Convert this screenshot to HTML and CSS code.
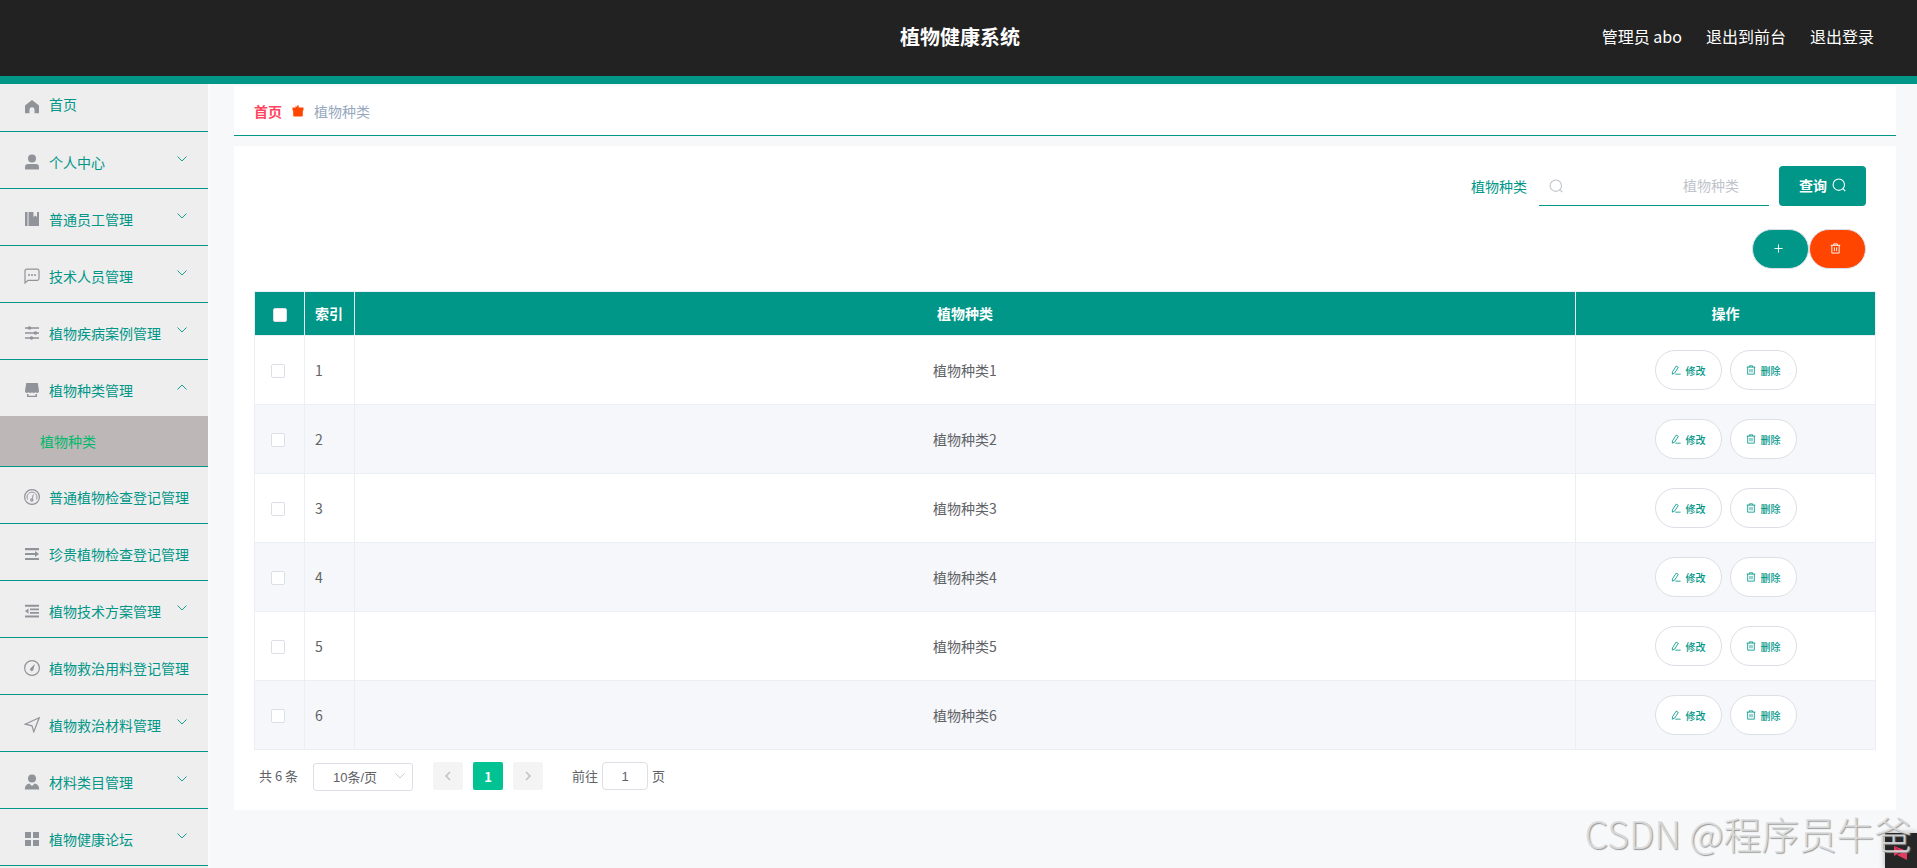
FILE: index.html
```
<!DOCTYPE html>
<html lang="zh-CN">
<head>
    <meta charset="UTF-8">
    <meta name="viewport" content="width=device-width, initial-scale=1.0">
    <title>植物健康系统</title>
    <link rel="stylesheet" href="styles.css">
</head>
<body>
    <!-- shared icons -->
    <svg class="sprite">
        <symbol id="arrow-down" viewBox="0 0 12 12"><path d="M1.5 3.500L6 8l4.500-4.500" fill="none" stroke="currentColor" stroke-width=".9"/></symbol>
        <symbol id="page-arrow" viewBox="0 0 12 12"><path d="M8 2L4 6l4 4" fill="none" stroke="currentColor" stroke-width="1.700"/></symbol>
        <symbol id="search" viewBox="0 0 14 14"><circle cx="6.800" cy="6.700" r="5.700" fill="none" stroke="currentColor" stroke-width="1.100"/><path d="M10.800 10.700l2.500 2.500" stroke="currentColor" stroke-width="1.200"/></symbol>
        <symbol id="trash" viewBox="0 0 12 12"><path d="M.800 2.500h10.400M4 2.500v-1.500h4v1.500M2 2.500v8.500h8V2.500M4.800 4.800v4M7.200 4.800v4" fill="none" stroke="currentColor"/></symbol>
        <symbol id="edit" viewBox="0 0 12 12"><path d="M1.800 8.200L6.200 1.300l2.600 1.600-4.400 6.800-2.900 1.300zM5.200 11h6.300" fill="none" stroke="currentColor"/></symbol>
    </svg>

    <header class="header">
        <h1 class="title">植物健康系统</h1>
        <div class="user-menu">
            <span>管理员 abo</span>
            <span>退出到前台</span>
            <span>退出登录</span>
        </div>
    </header>

    <div class="layout">
        <ul class="sidebar">
            <li class="item home">
                <svg class="icon" viewBox="0 0 16 16"><path d="M8 1L15 6.500v7.800h-4.500v-3.500a2.500 2.500 0 0 0-5 0v3.500H1V6.500z"/></svg>
                <span>首页</span>
            </li>
            <li class="item">
                <svg class="icon" viewBox="0 0 16 16"><circle cx="8" cy="4.500" r="4"/><path d="M1 15.500v-2.300q0-3.200 3.200-3.200h7.600q3.200 0 3.200 3.200v2.300z"/></svg>
                <span>个人中心</span>
                <svg class="arrow"><use href="#arrow-down"/></svg>
            </li>
            <li class="item">
                <svg class="icon" viewBox="0 0 16 16"><path d="M1 1h2.500v14H1zM4.500 1h5v5L11.500 4.500 13 6V1h2v14H4.500z"/></svg>
                <span>普通员工管理</span>
                <svg class="arrow"><use href="#arrow-down"/></svg>
            </li>
            <li class="item">
                <svg class="icon line" viewBox="0 0 16 16"><path d="M1 15V3q0-1.800 1.800-1.800h10.400q1.800 0 1.800 1.800v7.500q0 1.800-1.800 1.800H4z"/><path d="M4 7h2M7 7h2M10 7h2" stroke-width="1.500"/></svg>
                <span>技术人员管理</span>
                <svg class="arrow"><use href="#arrow-down"/></svg>
            </li>
            <li class="item">
                <svg class="icon" viewBox="0 0 16 16"><path d="M1 2.300h14v1.400H1zM1 7.300h14v1.400H1zM1 12.300h14v1.400H1z"/><circle cx="5.500" cy="3" r="1.800"/><circle cx="11.500" cy="8" r="1.800"/><circle cx="7.500" cy="13" r="1.800"/></svg>
                <span>植物疾病案例管理</span>
                <svg class="arrow"><use href="#arrow-down"/></svg>
            </li>
            <li class="item open">
                <svg class="icon" viewBox="0 0 16 16"><path d="M2.200 1h11.600L15 9q0 2-1.800 2-1 0-1.700-.8-.8.800-1.800.8t-1.700-.8q-.8.800-1.700.8t-1.800-.8q-.7.800-1.700.8Q1 11 1 9zM3 12h1.500v1.800h7V12H13v3H3z"/></svg>
                <span>植物种类管理</span>
                <svg class="arrow"><use href="#arrow-down"/></svg>
            </li>
            <li class="sub-item">植物种类</li>
            <li class="item">
                <svg class="icon line" viewBox="0 0 16 16"><circle cx="8" cy="8" r="7.400"/><path d="M3.600 10.500a5 5 0 1 1 8.800 0M8.300 9.800L9.300 5.500" stroke-width="1"/><circle cx="7.800" cy="11" r="1.100"/></svg>
                <span>普通植物检查登记管理</span>
            </li>
            <li class="item">
                <svg class="icon" viewBox="0 0 16 16"><path d="M1 2h14v2.200H1zM1 7h10V5l4 3-4 3V9H1zM1 11.900h14v2.200H1z"/></svg>
                <span>珍贵植物检查登记管理</span>
            </li>
            <li class="item">
                <svg class="icon" viewBox="0 0 16 16"><path d="M1 1.800h14v2H1zM6 5.500h9v1.800H6zM6 9h9v1.800H6zM1 12.400h14v2H1zM4.500 5.500v5.200L1 8.100z"/></svg>
                <span>植物技术方案管理</span>
                <svg class="arrow"><use href="#arrow-down"/></svg>
            </li>
            <li class="item">
                <svg class="icon line" viewBox="0 0 16 16"><circle cx="8" cy="8" r="7.400"/><path d="M10.800 4L9.300 10q-1 1.800-2.500.8T6.300 8.500z" fill="#909399" stroke="none"/></svg>
                <span>植物救治用料登记管理</span>
            </li>
            <li class="item">
                <svg class="icon line" viewBox="0 0 16 16"><path d="M1 7.200L15.200.8 9.800 14.800 8 8.800z"/></svg>
                <span>植物救治材料管理</span>
                <svg class="arrow"><use href="#arrow-down"/></svg>
            </li>
            <li class="item">
                <svg class="icon" viewBox="0 0 16 16"><circle cx="8" cy="4.500" r="4"/><path d="M.8 15.500q0-5.200 4.400-6L8 12l2.800-2.500q4.400.8 4.400 6z"/></svg>
                <span>材料类目管理</span>
                <svg class="arrow"><use href="#arrow-down"/></svg>
            </li>
            <li class="item">
                <svg class="icon" viewBox="0 0 16 16"><path d="M1 1h6v6H1zM9 1h6v6H9zM1 9h6v6H1zM9 9h6v6H9z"/></svg>
                <span>植物健康论坛</span>
                <svg class="arrow"><use href="#arrow-down"/></svg>
            </li>
        </ul>

        <main class="main">
            <div class="breadcrumb">
                <b>首页</b>
                <svg class="crumb-icon" viewBox="0 0 14 14"><path d="M2.200 6.500h9.600v5q0 1-1 1H3.200q-1 0-1-1zM1.500 3.500h11v3h-11zM5.500 4L4 2l2.200.8L6.600 1h.8l.5 3z"/></svg>
                <span>植物种类</span>
            </div>

            <div class="panel">
                <form class="search-form">
                    <label for="kind">植物种类</label>
                    <div class="search-box">
                        <svg><use href="#search"/></svg>
                        <input type="text" id="kind" name="kind" placeholder="植物种类">
                    </div>
                    <button type="button" class="query">查询<svg><use href="#search"/></svg></button>
                </form>

                <div class="actions">
                    <button class="add"><svg viewBox="0 0 12 12"><path d="M6 1.500v9M1.500 6h9" stroke="currentColor"/></svg></button>
                    <button class="remove"><svg><use href="#trash"/></svg></button>
                </div>

                <table class="table">
                    <thead>
                        <tr>
                            <th class="col-check"><i class="checkbox"></i></th>
                            <th class="col-index">索引</th>
                            <th>植物种类</th>
                            <th class="col-ops">操作</th>
                        </tr>
                    </thead>
                    <tbody id="rows"></tbody>
                </table>

                <div class="pagination">
                    <span class="total">共 6 条</span>
                    <div class="page-size">10条/页<svg><use href="#arrow-down"/></svg></div>
                    <button class="page"><svg><use href="#page-arrow"/></svg></button>
                    <button class="page current">1</button>
                    <button class="page next"><svg><use href="#page-arrow"/></svg></button>
                    <span class="jump">前往</span>
                    <input type="text" class="jump-input" value="1">
                    <span>页</span>
                </div>
            </div>
        </main>
    </div>

    <div class="corner">
        <svg viewBox="0 0 32 35"><path d="M9 13v10l7-4zM9 13l13 5v9l-10-5 4-2z" fill="#e6395f"/></svg>
    </div>
    <div class="watermark">CSDN @程序员牛爸</div>

    <script>
        const rows = document.getElementById("rows");
        for (let i = 1; i <= 6; i++) {
            rows.innerHTML += `
                <tr>
                    <td class="col-check"><i class="checkbox"></i></td>
                    <td class="col-index">${i}</td>
                    <td>植物种类${i}</td>
                    <td class="col-ops">
                        <div class="ops">
                            <button><svg><use href="#edit"/></svg>修改</button>
                            <button><svg><use href="#trash"/></svg>删除</button>
                        </div>
                    </td>
                </tr>`;
        }
    </script>
</body>
</html>
```
FILE: styles.css
```
* {
    box-sizing: border-box;
}
body {
    margin: 0;
    height: 868px;
    overflow: hidden;
    background: #f7f8fa;
    font-family: "Noto Sans CJK SC", sans-serif;
    font-size: 14px;
    color: #606266;
}
button, input {
    font-family: inherit;
    margin: 0;
    padding: 0;
}
svg {
    flex: none;
}
.sprite {
    display: none;
}

/* header */
.header {
    display: grid;
    grid-template-columns: 1fr auto 1fr;
    height: 84px;
    background: #222;
    border-bottom: 8px solid #009688;
    color: #fff;
    line-height: 72px;
}
.title {
    grid-column: 2;
    margin: 0;
    padding-left: 3px;
    font-size: 20px;
    font-weight: bold;
    line-height: 74px;
}
.user-menu {
    display: flex;
    justify-content: flex-end;
    gap: 24px;
    padding-right: 43px;
    font-size: 16px;
}

/* sidebar */
.layout {
    display: flex;
    height: 784px;
}
.sidebar {
    flex: none;
    width: 210px;
    margin: 0;
    padding: 0;
    list-style: none;
    background: #eee;
    border-right: 2px solid #fbfbfc;
    color: #009688;
}
.item {
    display: flex;
    align-items: center;
    height: 57px;
    padding: 3px 20px 0 24px;
    border-bottom: 1px solid #009688;
}
.item span {
    flex: 1;
    margin-left: 9px;
    white-space: nowrap;
}
.item.home {
    height: 48px;
    padding: 0 20px 2px 24px;
}
.home span {
    padding-bottom: 5px;
}
.item.open {
    height: 56px;
    border-bottom: 0;
}
.open .arrow {
    transform: rotate(180deg);
}
.icon {
    width: 16px;
    height: 16px;
    fill: #909399;
}
.icon.line {
    fill: none;
    stroke: #909399;
    stroke-width: 1.2;
}
.arrow {
    width: 12px;
    height: 12px;
    margin-bottom: 6px;
}
.sub-item {
    height: 51px;
    padding-left: 40px;
    border-bottom: 1px solid #009688;
    background: #bdb7b8;
    color: #00b96b;
    line-height: 51px;
}

/* content */
.main {
    flex: 1;
    padding: 2px 21px 0 24px;
}
.breadcrumb {
    display: flex;
    align-items: center;
    height: 50px;
    padding: 0 20px;
    background: #fff;
    border-bottom: 1px solid #009688;
    color: #97a8be;
}
.breadcrumb b {
    color: #ff4460;
}
.crumb-icon {
    width: 14px;
    height: 14px;
    margin: 0 9px;
    fill: #ff4500;
}
.panel {
    height: 664px;
    margin-top: 10px;
    padding: 20px 20px 0;
    background: #fff;
}
.search-form {
    display: flex;
    justify-content: flex-end;
    align-items: center;
    height: 40px;
    padding-right: 10px;
}
.search-form label {
    margin-right: 12px;
    color: #009688;
}
.search-box {
    display: flex;
    align-items: center;
    width: 230px;
    height: 40px;
    margin-right: 10px;
    padding: 0 30px 0 10px;
    border-bottom: 1px solid #009688;
    color: #c0c4cc;
}
.search-box svg, .query svg {
    width: 14px;
    height: 14px;
}
.search-box input {
    flex: 1;
    min-width: 0;
    padding-bottom: 2px;
    border: 0;
    outline: 0;
    font-size: 14px;
    text-align: right;
}
.search-box input::placeholder {
    color: #c0c4cc;
}
.query {
    display: flex;
    justify-content: center;
    align-items: center;
    gap: 5px;
    width: 87px;
    height: 40px;
    padding-bottom: 2px;
    border: 0;
    border-radius: 4px;
    background: #009688;
    color: #fff;
    font-size: 14px;
    font-weight: bold;
}
.actions {
    display: flex;
    justify-content: flex-end;
    margin: 23px 10px 22px 0;
}
.actions button {
    width: 57px;
    height: 40px;
    padding: 0 5px 2px 0;
    border: 1px solid #dcdfe6;
    border-radius: 20px;
    color: #fff;
}
.actions svg {
    width: 11px;
    height: 11px;
}
.actions .add {
    background: #009688;
}
.actions .remove {
    background: #ff4500;
}

/* table */
.table {
    width: 1622px;
    border-collapse: collapse;
    table-layout: fixed;
}
.table th, .table td {
    padding: 0;
    border: 1px solid #ebeef5;
    text-align: center;
}
.table th {
    height: 44px;
    padding-bottom: 1px;
    background: #009688;
    color: #fff;
}
.table td {
    height: 69px;
}
.table tbody tr:nth-child(even) {
    background: #f5f7fa;
}
.table .col-check {
    width: 50px;
    padding: 2px 3px 0 0;
}
.table th.col-check {
    padding: 2px 0 0 1px;
}
.table .col-index {
    width: 50px;
    padding-left: 10px;
    text-align: left;
}
.table .col-ops {
    width: 300px;
}
.checkbox {
    display: block;
    width: 14px;
    height: 14px;
    margin: 0 auto;
    border: 1px solid #dcdfe6;
    border-radius: 2px;
    background: #fff;
}
.ops {
    display: flex;
    justify-content: center;
    gap: 8px;
}
.ops button {
    display: flex;
    justify-content: center;
    align-items: center;
    gap: 5px;
    width: 67px;
    height: 40px;
    border: 1px solid #dcdfe6;
    border-radius: 20px;
    background: #fff;
    color: #009688;
    font-size: 10px;
    font-weight: 500;
}
.ops svg {
    width: 10px;
    height: 10px;
}

/* pagination */
.pagination {
    display: flex;
    align-items: center;
    height: 28px;
    margin-top: 12px;
    padding-left: 5px;
    font-size: 13px;
}
.pagination span {
    padding-bottom: 2px;
}
.page-size {
    display: flex;
    align-items: center;
    justify-content: space-between;
    width: 100px;
    height: 28px;
    margin: 2px 20px 0 15px;
    padding: 0 6px 2px 19px;
    border: 1px solid #dcdfe6;
    border-radius: 3px;
}
.page-size, .jump-input {
    font-family: "Liberation Sans", "Noto Sans CJK SC", sans-serif;
}
.page-size svg, .page svg {
    width: 12px;
    height: 12px;
    color: #c0c4cc;
}
.page {
    width: 30px;
    height: 28px;
    margin-right: 10px;
    border: 0;
    border-radius: 2px;
    background: #f4f4f5;
    font-size: 13px;
    font-weight: bold;
}
.page.current {
    background: #00c292;
    color: #fff;
}
.next svg {
    transform: rotate(180deg);
}
.jump {
    margin-left: 19px;
}
.jump-input {
    width: 46px;
    height: 28px;
    margin: 0 4px;
    border: 1px solid #dcdfe6;
    border-radius: 4px;
    color: #606266;
    font-size: 13px;
    text-align: center;
}

/* overlays in the bottom right corner */
.corner {
    position: absolute;
    right: 0;
    bottom: 0;
    width: 32px;
    height: 35px;
    background: #262626;
    box-shadow: 0 0 6px rgba(0, 0, 0, 0.3);
}
.corner svg {
    width: 32px;
    height: 35px;
}
.watermark {
    position: absolute;
    right: 5px;
    bottom: 8px;
    color: rgba(222, 222, 222, 0.9);
    font-size: 37.7px;
    font-weight: 300;
    line-height: 54px;
    text-shadow: 1px 1px 1px #999;
    white-space: nowrap;
}
```
